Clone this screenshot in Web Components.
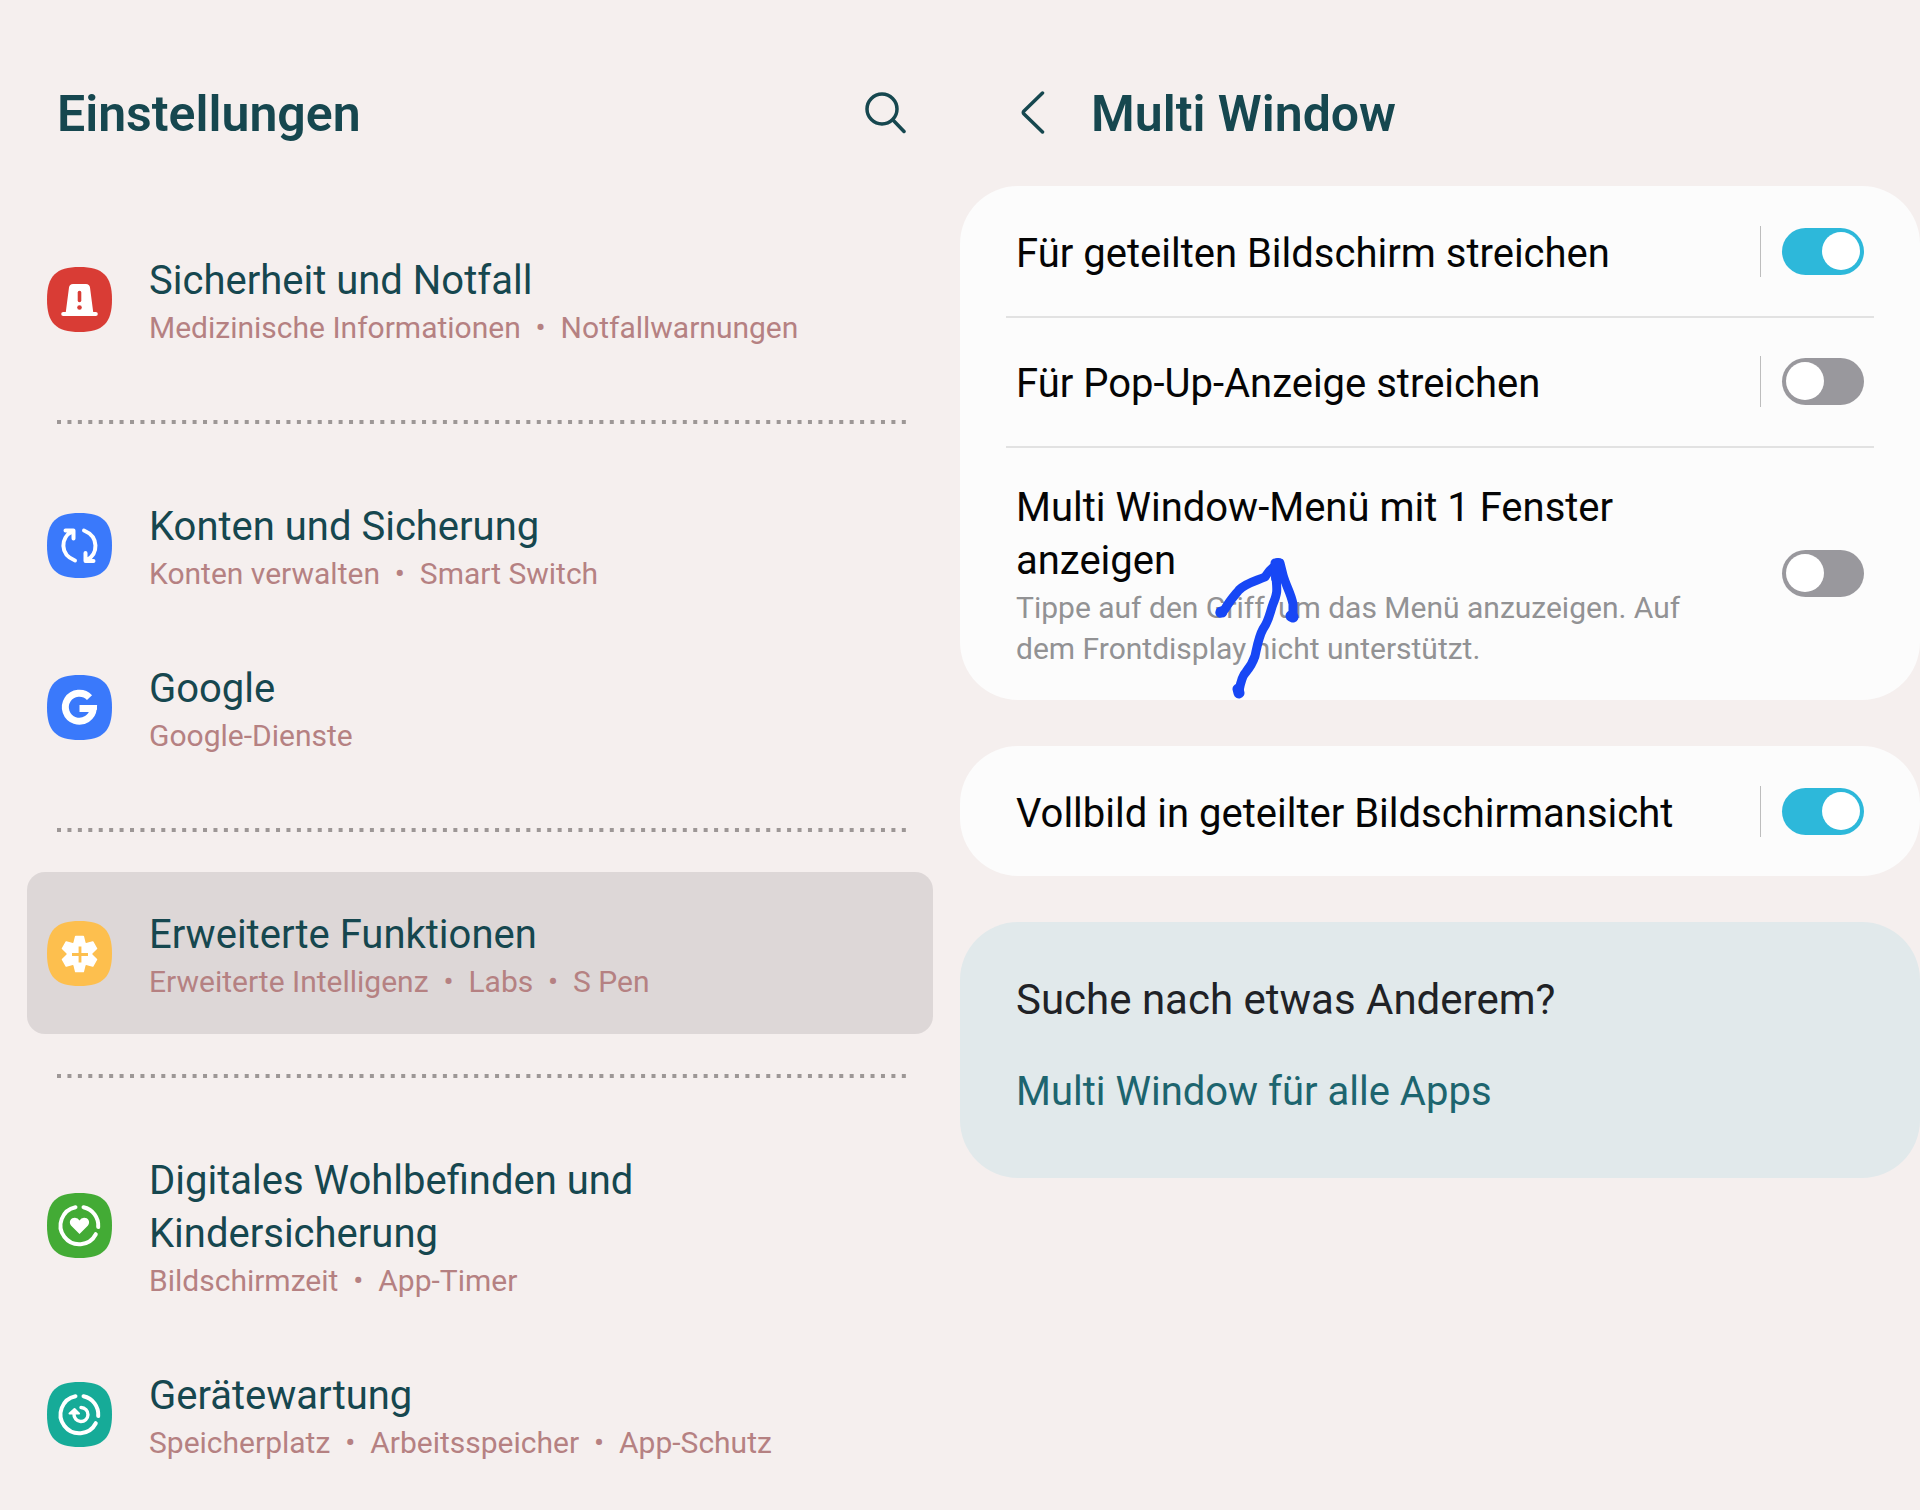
<!DOCTYPE html>
<html lang="de">
<head>
<meta charset="utf-8">
<meta name="viewport" content="width=device-width, initial-scale=1">
<title>Einstellungen</title>
<style>
  body {
    margin: 0;
    background: #f5efee;
    color: #16474f;
    font-family: Roboto, "Noto Sans", sans-serif;
    font-size: 40px;
    line-height: 53px;
  }
</style>
</head>
<body>

<settings-layout>
  <settings-pane slot="list" class="list">
    <pane-header slot="header">
      Einstellungen
      <icon-button slot="end" icon="search" label="Suchen"></icon-button>
    </pane-header>
    <settings-link icon="alert" color="#d93c35">Sicherheit und Notfall
      <span slot="info">Medizinische Informationen &nbsp;•&nbsp; Notfallwarnungen</span></settings-link>
    <dotted-divider></dotted-divider>
    <settings-link icon="sync" color="#3a79fb">Konten und Sicherung
      <span slot="info">Konten verwalten &nbsp;•&nbsp; Smart Switch</span></settings-link>
    <settings-link icon="google" color="#3a79fb">Google
      <span slot="info">Google-Dienste</span></settings-link>
    <dotted-divider></dotted-divider>
    <settings-link icon="gear" color="#fdbf4e" selected>Erweiterte Funktionen
      <span slot="info">Erweiterte Intelligenz &nbsp;•&nbsp; Labs &nbsp;•&nbsp; S Pen</span></settings-link>
    <dotted-divider></dotted-divider>
    <settings-link icon="wellbeing" color="#43ab35">Digitales Wohlbefinden und Kindersicherung
      <span slot="info">Bildschirmzeit &nbsp;•&nbsp; App-Timer</span></settings-link>
    <settings-link icon="care" color="#16ab98">Gerätewartung
      <span slot="info">Speicherplatz &nbsp;•&nbsp; Arbeitsspeicher &nbsp;•&nbsp; App-Schutz</span></settings-link>
  </settings-pane>

  <settings-pane slot="detail">
    <pane-header slot="header" compact>
      <icon-button slot="start" icon="back" label="Zurück"></icon-button>
      Multi Window
    </pane-header>
    <settings-card>
      <switch-row checked separated>Für geteilten Bildschirm streichen</switch-row>
      <switch-row separated>Für Pop-Up-Anzeige streichen</switch-row>
      <switch-row>Multi Window-Menü mit 1 Fenster anzeigen
        <span slot="info">Tippe auf den Griff, um das Menü anzuzeigen. Auf dem Frontdisplay nicht unterstützt.</span>
        <arrow-mark slot="mark"></arrow-mark></switch-row>
    </settings-card>
    <settings-card>
      <switch-row checked separated>Vollbild in geteilter Bildschirmansicht</switch-row>
    </settings-card>
    <related-card>
      Suche nach etwas Anderem?
      <span slot="link">Multi Window für alle Apps</span>
    </related-card>
  </settings-pane>
</settings-layout>

<script>
const ring = `
  <g fill="none" stroke="#fff" stroke-width="4" stroke-linecap="round">
    <path d="M28.500 14.200A18.700 18.700 0 1 0 48.800 41.200"/>
    <path d="M36.500 14.200A18.700 18.700 0 0 1 51.200 34"/>
  </g>`;

const icons = {
  alert: `
    <path d="M26 17h13q3.500 0 4 3.500L46.200 45h2.600a1.900 1.900 0 0 1 0 4H16.200a1.900 1.900 0 0 1 0-4h2.600L22 20.500Q22.500 17 26 17Z" fill="#fff"/>
    <path d="M32.500 25.500v8" stroke="#d93c35" stroke-width="3.600" stroke-linecap="round"/>
    <circle cx="32.500" cy="40.500" r="2.300" fill="#d93c35"/>`,
  sync: `
    <g fill="none" stroke="#fff" stroke-width="4" stroke-linecap="round" stroke-linejoin="round">
      <path d="M28 47.500C12.500 41.500 13.500 24.500 25 18.500M18.500 17.500H26.500V25.500"/>
      <path d="M37 17.500C52.500 24 51 41 40 47M46.500 48H38.500V40"/>
    </g>`,
  google: `
    <path d="M42.500 22.600A14 14 0 1 0 46.300 33.500H32.500" fill="none" stroke="#fff" stroke-width="7"/>
    <path d="M46 30h4v4.500l-4 2Z" fill="#fff"/>`,
  gear: `
    <g transform="translate(32.500 33)" fill="#fff" stroke="#fff" stroke-width="1.500" stroke-linejoin="round">
      <circle r="12"/>
      <path id="tooth" d="M-3.800-17.500H3.800L5.400-11V11L3.800 17.500H-3.800L-5.400 11V-11Z"/>
      <use href="#tooth" transform="rotate(60)"/>
      <use href="#tooth" transform="rotate(120)"/>
    </g>
    <path d="M25 33.500H41M33 25.500V41.500" stroke="#fdbf4e" stroke-width="2.800"/>`,
  wellbeing: ring + `
    <path d="M32.500 41L24 32.500C21 28 24.500 24.500 28 24.700Q31 25 32.500 27.500Q34 25 37 24.700C40.500 24.500 44 28 41 32.500Z" fill="#fff"/>`,
  care: ring + `
    <path d="M34 25.500A7 7 0 1 1 27 32" fill="none" stroke="#fff" stroke-width="3.400" stroke-linecap="round"/>
    <path d="M22.500 31.500L27.500 27L32 31.500Z" fill="#fff" stroke="#fff" stroke-width="2" stroke-linejoin="round"/>`,
};

const buttons = {
  search: {
    width: 42,
    body: `<circle cx="18" cy="18" r="15"/><path d="M29 29L40 40.500"/>`,
  },
  back: {
    width: 24,
    body: `<path d="M21.500 2L3 20Q1.500 21.500 3 23L21.500 41"/>`,
  },
};

class BaseElement extends HTMLElement {
  connectedCallback() {
    if (this.shadowRoot) return;
    this.attachShadow({ mode: "open" }).innerHTML = this.render();
  }
}

customElements.define("settings-layout", class extends BaseElement {
  render() {
    return `
      <style>
        :host {
          display: grid;
          grid-template-columns: minmax(0, 1fr) minmax(0, 1fr);
          min-height: 100vh;
        }
      </style>
      <slot name="list"></slot>
      <slot name="detail"></slot>`;
  }
});

customElements.define("settings-pane", class extends BaseElement {
  render() {
    return `
      <style>
        :host { display: block; }
        .body { display: flex; flex-direction: column; }
        :host(:not(.list)) .body { gap: 46px; }
      </style>
      <slot name="header"></slot>
      <div class="body"><slot></slot></div>`;
  }
});

customElements.define("pane-header", class extends BaseElement {
  render() {
    return `
      <style>
        :host {
          display: flex;
          align-items: center;
          padding: 78px 54px 72px 57px;
        }
        :host([compact]) { gap: 46px; padding: 78px 56px 40px 61px; }
        h1 {
          flex: 1;
          margin: 0;
          padding-top: 4px;
          font-size: 50px;
          font-weight: 600;
          line-height: 64px;
        }
      </style>
      <slot name="start"></slot>
      <h1><slot></slot></h1>
      <slot name="end"></slot>`;
  }
});

customElements.define("icon-button", class extends BaseElement {
  render() {
    const { width, body } = buttons[this.getAttribute("icon")];
    return `
      <style>
        :host { display: block; }
        button {
          display: block;
          padding: 0;
          border: 0;
          background: none;
          color: inherit;
          cursor: pointer;
        }
        svg { display: block; }
      </style>
      <button type="button" aria-label="${this.getAttribute("label")}">
        <svg width="${width}" height="43" viewBox="0 0 ${width} 43" fill="none"
          stroke="currentColor" stroke-width="3.500" stroke-linecap="round">${body}</svg>
      </button>`;
  }
});

customElements.define("settings-link", class extends BaseElement {
  render() {
    return `
      <style>
        :host { display: block; margin: 0 27px; }
        a {
          display: flex;
          align-items: center;
          gap: 37px;
          padding: 32px 20px;
          border-radius: 18px;
          color: inherit;
          text-decoration: none;
        }
        :host([selected]) a { background: #ddd7d7; }
        svg { flex: none; display: block; }
        .text { flex: 1; max-width: 660px; padding-top: 4px; }
        .info {
          color: #b58182;
          font-size: 30px;
          line-height: 41px;
        }
      </style>
      <a href="#${this.getAttribute("icon")}">
        <svg width="65" height="65" viewBox="0 0 65 65" aria-hidden="true">
          <path d="M32.500 0C56 0 65 9 65 32.500S56 65 32.500 65 0 56 0 32.500 9 0 32.500 0Z" fill="${this.getAttribute("color")}"/>
          ${icons[this.getAttribute("icon")]}
        </svg>
        <div class="text">
          <div><slot></slot></div>
          <div class="info"><slot name="info"></slot></div>
        </div>
      </a>`;
  }
});

customElements.define("dotted-divider", class extends BaseElement {
  render() {
    return `
      <style>
        :host { display: block; padding: 40px 54px 40px 57px; }
        svg { display: block; width: 100%; height: 4px; }
      </style>
      <svg aria-hidden="true"><line x2="100%" y1="2" y2="2" stroke="#9d9796" stroke-width="4" stroke-dasharray="4 6.430"/></svg>`;
  }
});

customElements.define("settings-card", class extends BaseElement {
  render() {
    return `
      <style>
        :host {
          display: block;
          border-radius: 58px;
          background: #fcfcfc;
          color: #050505;
        }
        /* hairline between two rows */
        ::slotted(:not(:first-child)) {
          background: linear-gradient(#e2e2e2, #e2e2e2) center top / calc(100% - 92px) 2px no-repeat;
        }
      </style>
      <slot></slot>`;
  }
});

customElements.define("switch-row", class extends BaseElement {
  render() {
    return `
      <style>
        :host { display: block; position: relative; }
        label {
          display: flex;
          align-items: center;
          gap: 21px;
          box-sizing: border-box;
          min-height: 130px;
          padding: 31px 56px;
        }
        .text { flex: 1; padding: 4px 50px 0 0; }
        .info {
          color: #929294;
          font-size: 30px;
          line-height: 41px;
        }
        .line { width: 1px; height: 51px; background: #bdbdbd; }
        :host(:not([separated])) .line { display: none; }
        input {
          flex: none;
          appearance: none;
          display: flex;
          align-items: center;
          width: 82px;
          height: 47px;
          margin: 0;
          padding: 0 4px;
          box-sizing: border-box;
          border-radius: 24px;
          background: #99989d;
        }
        input::before {
          content: "";
          width: 38px;
          height: 38px;
          border-radius: 50%;
          background: #fff;
        }
        input:checked { justify-content: flex-end; background: #2db8da; }
      </style>
      <label>
        <div class="text">
          <div><slot></slot></div>
          <div class="info"><slot name="info"></slot></div>
        </div>
        <span class="line"></span>
        <input type="checkbox" role="switch" ${this.hasAttribute("checked") ? "checked" : ""}>
      </label>
      <slot name="mark"></slot>`;
  }
});

// Hand-drawn arrow laid over the row it belongs to.
customElements.define("arrow-mark", class extends BaseElement {
  render() {
    return `
      <style>
        :host {
          position: absolute;
          left: 250px;
          top: 104px;
          pointer-events: none;
        }
        svg { display: block; }
      </style>
      <svg width="96" height="152" viewBox="0 0 96 152" fill="none" stroke="#1747f5" stroke-width="9"
        stroke-linecap="round" stroke-linejoin="round" aria-hidden="true">
        <path d="M29 141C31 130 33 125 36 122C41 116 43 112 45 106C48 92 49 86 53 79C59 71 60 62 63 54C68 42 67 40 66 27"/>
        <path d="M10 63L15 59C20 50 25 45 29 40C36 33 46 31 55 27C59 20 61 19 67 14"/>
        <path d="M65 13H70L73 25C76 36 81 43 83 54L83 66"/>
        <path d="M68 14L67 28" stroke-width="12"/>
        <path d="M28 139L29 143M81 66L83 67M11 62H12" stroke-width="11"/>
      </svg>`;
  }
});

customElements.define("related-card", class extends BaseElement {
  render() {
    return `
      <style>
        :host {
          display: block;
          padding: 51px 56px 60px;
          border-radius: 58px;
          background: #e1e9eb;
        }
        h2 {
          margin: 0 0 39px;
          color: #202226;
          font-size: 42px;
          font-weight: 400;
        }
        a { display: block; color: #1d656f; text-decoration: none; }
      </style>
      <h2><slot></slot></h2>
      <a href="#apps"><slot name="link"></slot></a>`;
  }
});
</script>
</body>
</html>
